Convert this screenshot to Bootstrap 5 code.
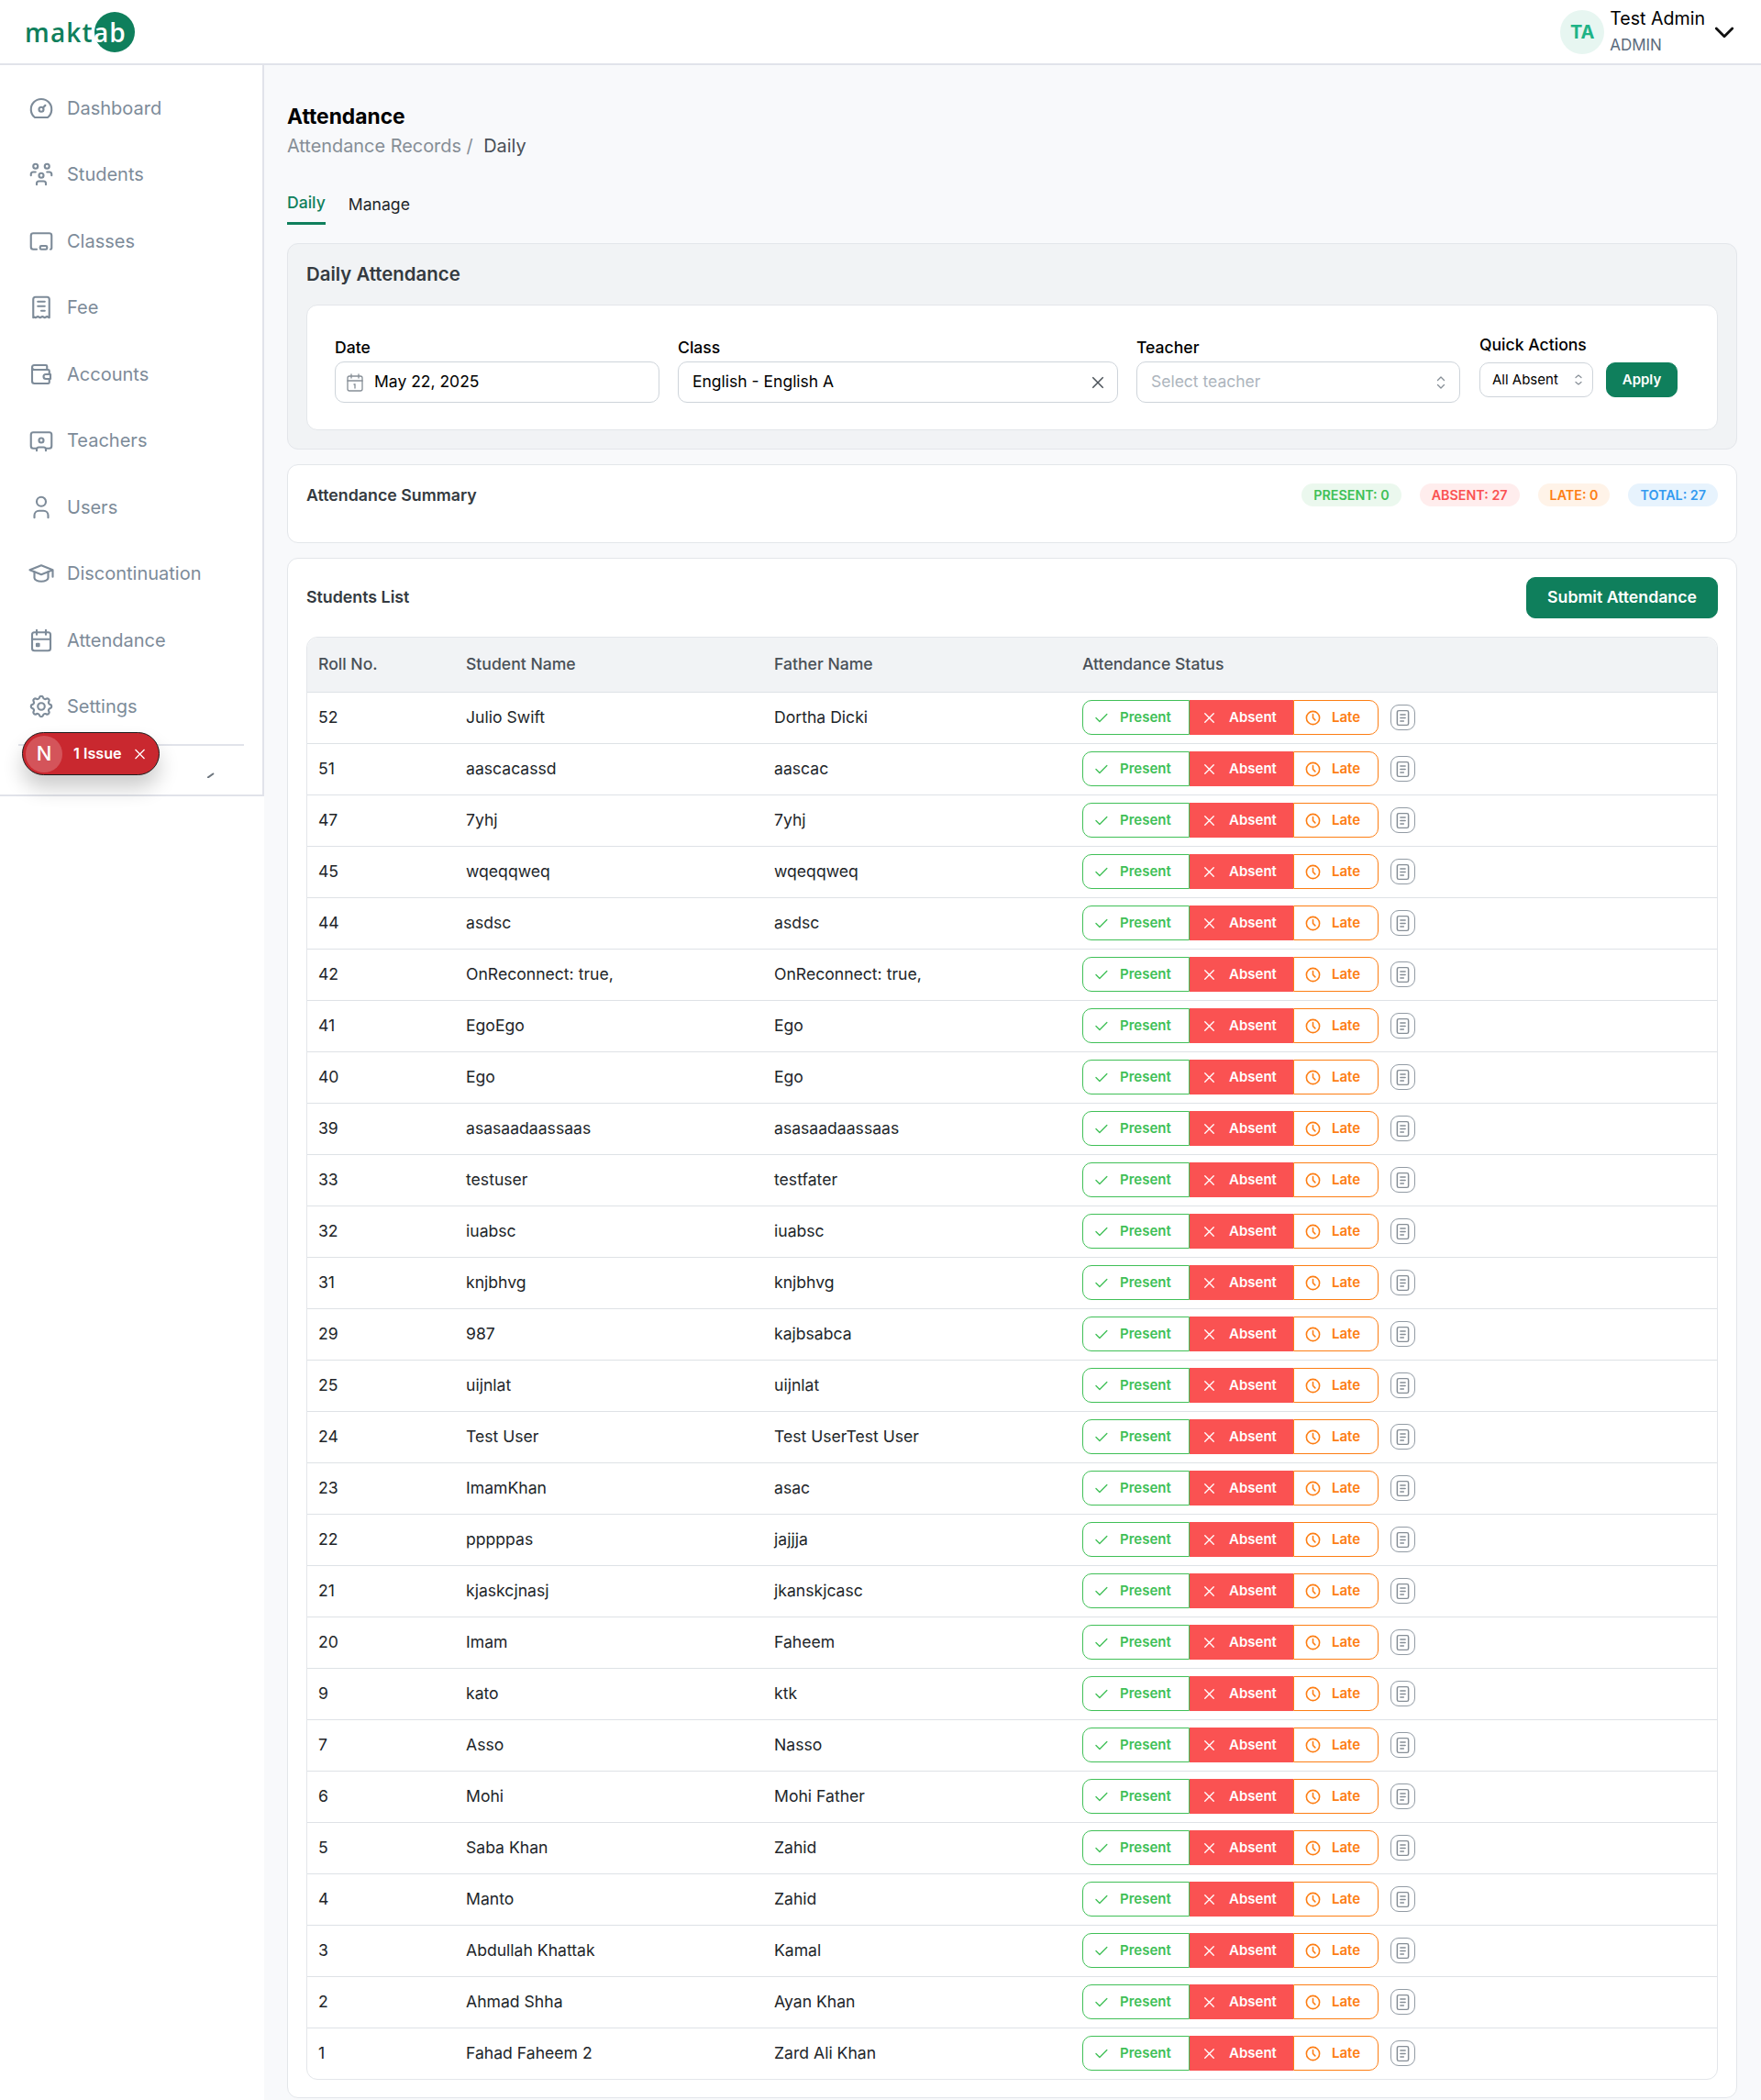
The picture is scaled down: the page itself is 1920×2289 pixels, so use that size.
<!DOCTYPE html>
<html lang="en">
<head>
<meta charset="UTF-8"/>
<title>Attendance</title>
<link href="https://cdn.jsdelivr.net/npm/bootstrap@5.3.0/dist/css/bootstrap.min.css" rel="stylesheet"/>
<style>
body { font-family: Inter, "Liberation Sans", sans-serif; background: #f8f9fb; font-size: 16px; color: #000; }
.top-bar { height: 71px; padding: 0; background: #fff; border-bottom: 2px solid #e1e3ea; }
.brand-mark { position: relative; display: block; width: 120px; height: 46px; margin-left: 27px; font-family: "Open Sans", sans-serif; font-weight: 600; font-size: 28px; line-height: 46px; color: #0f7f5c; letter-spacing: 1.2px; }
.brand-mark i { position: absolute; left: 76px; top: 1px; width: 44px; height: 44px; border-radius: 50%; background: #0f7f5c; z-index: 0; }
.brand-mark span { position: relative; z-index: 1; }
.brand-mark b { color: #fff; font-weight: 600; }
.user-dot { width: 48px; height: 48px; border-radius: 50%; background: #e7f6f1; color: #1eb386; font-weight: 700; font-size: 20px; }
.user-text { margin-left: 6px; margin-right: 7px; }
.user-name { font-size: 19.6px; line-height: 29px; }
.user-role { font-size: 17px; line-height: 29px; color: #5b6b7d; }
.user-caret { margin-right: 26px; }
.side-col { width: 288px; flex: 0 0 288px; background: #fff; }
.side-inner { position: relative; height: 797px; border-right: 2px solid #e1e3ea; border-bottom: 2px solid #e1e3ea; padding-top: 10.5px; }
.side-link { height: 72.5px; padding: 0 0 0 30px; gap: 13px; color: #7d8b99; font-size: 20px; }
.side-link svg { width: 30px; height: 30px; flex: none; }
.side-rule { position: absolute; left: 20px; right: 20px; top: 740px; border-top: 2px solid #e1e3ea; }
.side-mark { position: absolute; left: 226px; top: 771px; }
.issue-pill { position: absolute; left: 24px; top: 727px; width: 150px; height: 47px; border-radius: 24px; background: #c9282f; border: 1.5px solid #1c1c1c; box-shadow: 0 14px 22px rgba(0,0,0,.2); color: #fff; font-weight: 600; font-size: 16.2px; }
.issue-n { width: 40px; height: 40px; margin-left: 3px; border-radius: 50%; background: #d4545a; font-size: 22px; font-weight: 500; }
.page-body { flex: 1; min-width: 0; padding: 0 26px 2px 25px; }
.page-title { font-size: 22.8px; font-weight: 700; line-height: 30px; margin: 41px 0 0; }
.crumbs { font-size: 19.9px; line-height: 30px; color: #868e96; margin: 2px 0 27px; }
.crumbs span { color: #495057; margin-left: 6px; }
.tab-row { gap: 25px; height: 44px; }
.tab-item { font-size: 17.6px; line-height: 26px; color: #212529; padding-top: 9px; }
.tab-item.on { color: #0f7f5c; font-weight: 500; height: 44px; padding-top: 7px; border-bottom: 3px solid #0f7f5c; }
.box { border: 1px solid #e3e6ea; border-radius: 12px; background: #fff; margin-bottom: 16px; }
.box-grey { background: #f1f3f5; padding: 19px 20px 20px; margin-top: 20px; }
.box-title { font-size: 20.4px; font-weight: 600; color: #343a40; line-height: 28px; margin: 0 0 19px; }
.filter-box { border: 1px solid #e3e6ea; border-radius: 12px; background: #fff; height: 137px; padding: 31px 30px 0; }
.filter-grid { display: grid; grid-template-columns: 354px 480px 353px auto; gap: 20px; }
.filter-field { padding-top: 3px; }
.filter-field label, .filter-quick label { display: block; font-size: 17.6px; line-height: 24px; font-weight: 500; margin-bottom: 3px; }
.filter-quick label { margin-bottom: 7px; }
.filter-quick { padding-left: 1px; }
.fake-input { height: 45px; border: 1.5px solid #ced4da; border-radius: 10px; background: #fff; padding: 0 13px 0 15px; font-size: 17.5px; }
.fake-input.blank { color: #adb5bd; }
.fake-input.dated { padding-left: 9px; gap: 9px; }
.fake-small { height: 38px; width: 124px; border: 1.5px solid #ced4da; border-radius: 10px; padding: 0 10px 0 13px; font-size: 15px; }
.quick-row { gap: 14px; }
.btn-green { background: #0f7f5c; border-color: #0f7f5c; color: #fff; font-weight: 600; }
.btn-green:hover { background: #0d6e50; color: #fff; }
.apply-btn { height: 38px; width: 78px; padding: 0; border-radius: 10px; font-size: 15px; }
.submit-btn { height: 45px; width: 209px; padding: 0; border-radius: 10px; font-size: 17.7px; }
.sum-box { height: 86px; padding: 20px; }
.sum-title { font-size: 17.8px; font-weight: 600; color: #343a40; }
.tally { height: 25px; padding: 0 13px; border-radius: 13px; font-size: 14.3px; font-weight: 600; line-height: 25px; margin-left: 20px; }
.tally-p { background: #ebf8ee; color: #40c057; }
.tally-a { background: #ffeded; color: #fa5252; }
.tally-l { background: #fff3e8; color: #fd7e14; }
.tally-t { background: #e7f3fd; color: #339af0; }
.list-box { height: 1679px; padding: 20px; margin-bottom: 0; }
.list-top { height: 45px; margin-bottom: 20px; }
.grid-wrap { border: 1px solid #e3e6ea; border-radius: 12px; height: 1573px; }
.grid-wrap table { table-layout: fixed; margin: 0; font-size: 17.6px; }
.grid-wrap th { height: 59px; background: #f1f3f5; font-weight: 500; color: #495057; padding: 0 12px; vertical-align: middle; border-bottom: 1px solid #dee2e6; }
.grid-wrap th:first-child { border-top-left-radius: 12px; }
.grid-wrap th:last-child { border-top-right-radius: 12px; }
.grid-wrap td { height: 56px; padding: 0 12px; vertical-align: middle; border-bottom: 1px solid #dee2e6; }
.grid-wrap tr:last-child td { border-bottom: 0; }
.mark-group { height: 38px; }
.mark-btn { display: flex; align-items: center; height: 38px; font-size: 15px; font-weight: 600; background: #fff; border: 1.5px solid; }
.mark-btn svg { width: 19px; height: 19px; flex: none; }
.mark-p { width: 117px; padding-left: 10px; gap: 11px; color: #40c057; border-color: #40c057; border-radius: 10px 0 0 10px; }
.mark-a { width: 113px; padding-left: 12px; gap: 12px; color: #fff; background: #fa5252; border-color: #fa5252; border-width: 1.5px 0; }
.mark-l { width: 93px; padding-left: 11px; gap: 11px; color: #fd7e14; border-color: #fd7e14; border-radius: 0 10px 10px 0; }
.note-btn { width: 27px; height: 28px; margin-left: 13px; border: 1.5px solid #929ba4; border-radius: 9px; color: #868e96; }
.note-btn svg { width: 21px; height: 21px; }
</style>
</head>
<body>

<nav class="navbar top-bar">
  <div class="d-flex align-items-center justify-content-between w-100">
    <a class="brand-mark text-decoration-none"><i></i><span>makt<b>ab</b></span></a>
    <div class="d-flex align-items-center">
      <div class="user-dot d-flex align-items-center justify-content-center">TA</div>
      <div class="user-text">
        <div class="user-name">Test Admin</div>
        <div class="user-role">ADMIN</div>
      </div>
      <svg class="user-caret" width="28" height="28" viewBox="0 0 24 24" fill="none" stroke="#111" stroke-width="2.4" stroke-linecap="round" stroke-linejoin="round"><path d="M4.500 8.500l7.500 7.500l7.500 -7.500"/></svg>
    </div>
  </div>
</nav>

<div class="d-flex">
  <aside class="side-col">
    <div class="side-inner">
      <div id="side-nav" class="d-flex flex-column"></div>
      <div class="side-rule"></div>
      <svg class="side-mark" width="8" height="6" viewBox="0 0 8 6"><path d="M0 6l7 -5" stroke="#6c757d" stroke-width="2"/></svg>
      <div class="issue-pill d-flex align-items-center">
        <div class="issue-n d-flex align-items-center justify-content-center">N</div>
        <span class="ms-2 ps-1">1 Issue</span>
        <svg class="ms-2 ps-1" width="19" height="14" viewBox="0 0 14 14" fill="none" stroke="#fff" stroke-width="1.3"><path d="M2 2l10 10M12 2l-10 10"/></svg>
      </div>
    </div>
  </aside>

  <main class="page-body">
    <h1 class="page-title">Attendance</h1>
    <div class="crumbs">Attendance Records / <span>Daily</span></div>

    <div class="d-flex tab-row">
      <div class="tab-item on">Daily</div>
      <div class="tab-item">Manage</div>
    </div>

    <div class="box box-grey">
      <h2 class="box-title">Daily Attendance</h2>
      <div class="filter-box">
        <div class="filter-grid">
          <div class="filter-field">
            <label>Date</label>
            <div class="fake-input dated d-flex align-items-center">
              <svg width="24" height="24" viewBox="0 0 24 24" fill="none" stroke="#868e96" stroke-width="1.300" stroke-linecap="round"><rect x="4" y="5" width="16" height="16" rx="2"/><path d="M16 3v4M8 3v4M4 10h16M11 14h1v4"/></svg>
              <span>May 22, 2025</span>
            </div>
          </div>
          <div class="filter-field">
            <label>Class</label>
            <div class="fake-input d-flex align-items-center justify-content-between">
              <span>English - English A</span>
              <svg width="16" height="16" viewBox="0 0 14 14" fill="none" stroke="#495057" stroke-width="1.3"><path d="M2 2l10 10M12 2l-10 10"/></svg>
            </div>
          </div>
          <div class="filter-field">
            <label>Teacher</label>
            <div class="fake-input blank d-flex align-items-center justify-content-between">
              <span>Select teacher</span>
              <svg width="14" height="18" viewBox="0 0 14 18" fill="none" stroke="#868e96" stroke-width="1.3" stroke-linecap="round" stroke-linejoin="round"><path d="M3.500 6.500L7 3l3.500 3.500M3.500 11.500L7 15l3.500 -3.500"/></svg>
            </div>
          </div>
          <div class="filter-quick">
            <label>Quick Actions</label>
            <div class="d-flex quick-row align-items-center">
              <div class="fake-small d-flex align-items-center justify-content-between">
                <span>All Absent</span>
                <svg width="10" height="16" viewBox="0 0 10 16" fill="none" stroke="#868e96" stroke-width="1.200" stroke-linecap="round" stroke-linejoin="round"><path d="M2 5.500L5 3l3 2.500M2 10.500L5 13l3 -2.500"/></svg>
              </div>
              <button class="btn btn-green apply-btn">Apply</button>
            </div>
          </div>
        </div>
      </div>
    </div>

    <div class="box sum-box d-flex justify-content-between align-items-start">
      <div class="sum-title">Attendance Summary</div>
      <div class="d-flex">
        <span class="tally tally-p">PRESENT: 0</span>
        <span class="tally tally-a">ABSENT: 27</span>
        <span class="tally tally-l">LATE: 0</span>
        <span class="tally tally-t">TOTAL: 27</span>
      </div>
    </div>

    <div class="box list-box">
      <div class="list-top d-flex align-items-center justify-content-between">
        <div class="sum-title">Students List</div>
        <button class="btn btn-green submit-btn">Submit Attendance</button>
      </div>
      <div class="grid-wrap">
        <table class="table">
          <colgroup><col style="width:161px"/><col style="width:336px"/><col style="width:336px"/><col/></colgroup>
          <thead><tr><th>Roll No.</th><th>Student Name</th><th>Father Name</th><th>Attendance Status</th></tr></thead>
          <tbody id="rows"></tbody>
        </table>
      </div>
    </div>
  </main>
</div>

<script src="https://cdn.jsdelivr.net/npm/bootstrap@5.3.0/dist/js/bootstrap.bundle.min.js"></script>
<script>
const stroke = 'fill="none" stroke="currentColor" stroke-width="1.700" stroke-linecap="round" stroke-linejoin="round"';
const navItems = [
  ['Dashboard', '<path d="M12 13m-2 0a2 2 0 1 0 4 0a2 2 0 1 0 -4 0"/><path d="M13.450 11.550l2.050 -2.050"/><path d="M6.400 20a9 9 0 1 1 11.200 0z"/>'],
  ['Students', '<path d="M10 13a2 2 0 1 0 4 0a2 2 0 0 0 -4 0"/><path d="M8 21v-1a2 2 0 0 1 2 -2h4a2 2 0 0 1 2 2v1"/><path d="M15 5a2 2 0 1 0 4 0a2 2 0 0 0 -4 0"/><path d="M17 10h2a2 2 0 0 1 2 2v1"/><path d="M5 5a2 2 0 1 0 4 0a2 2 0 0 0 -4 0"/><path d="M3 13v-1a2 2 0 0 1 2 -2h2"/>'],
  ['Classes', '<path d="M8 19h-3a2 2 0 0 1 -2 -2v-10a2 2 0 0 1 2 -2h14a2 2 0 0 1 2 2v11a1 1 0 0 1 -1 1"/><path d="M11 17a1 1 0 0 1 1 -1h4a1 1 0 0 1 1 1v1a1 1 0 0 1 -1 1h-4a1 1 0 0 1 -1 -1z"/>'],
  ['Fee', '<path d="M5 21v-16a2 2 0 0 1 2 -2h10a2 2 0 0 1 2 2v16l-2 -1l-2 1l-2 -1l-2 1l-2 -1l-2 1l-2 -1z"/><path d="M9 7h6M9 11h6M12 15h3"/>'],
  ['Accounts', '<path d="M17 8v-3a1 1 0 0 0 -1 -1h-10a2 2 0 0 0 0 4h12a1 1 0 0 1 1 1v3m0 4v3a1 1 0 0 1 -1 1h-12a2 2 0 0 1 -2 -2v-12"/><path d="M20 12v4h-4a2 2 0 0 1 0 -4h4"/>'],
  ['Teachers', '<path d="M8 19h-3a2 2 0 0 1 -2 -2v-10a2 2 0 0 1 2 -2h14a2 2 0 0 1 2 2v10a2 2 0 0 1 -2 2h-3"/><path d="M10 12a2 2 0 1 0 4 0a2 2 0 0 0 -4 0"/><path d="M8 21v-1a2 2 0 0 1 2 -2h4a2 2 0 0 1 2 2v1"/>'],
  ['Users', '<path d="M8 7a4 4 0 1 0 8 0a4 4 0 0 0 -8 0"/><path d="M6 21v-2a4 4 0 0 1 4 -4h4a4 4 0 0 1 4 4v2"/>'],
  ['Discontinuation', '<path d="M22 9l-10 -4l-10 4l10 4l10 -4v6"/><path d="M6 10.600v5.400a6 3 0 0 0 12 0v-5.400"/>'],
  ['Attendance', '<path d="M4 7a2 2 0 0 1 2 -2h12a2 2 0 0 1 2 2v12a2 2 0 0 1 -2 2h-12a2 2 0 0 1 -2 -2z"/><path d="M16 3v4M8 3v4M4 11h16"/><path d="M8 15h2v2h-2z"/>'],
  ['Settings', '<path d="M10.325 4.317c.426 -1.756 2.924 -1.756 3.350 0a1.724 1.724 0 0 0 2.573 1.066c1.543 -.940 3.310 .826 2.370 2.370a1.724 1.724 0 0 0 1.065 2.572c1.756 .426 1.756 2.924 0 3.350a1.724 1.724 0 0 0 -1.066 2.573c.940 1.543 -.826 3.310 -2.370 2.370a1.724 1.724 0 0 0 -2.572 1.065c-.426 1.756 -2.924 1.756 -3.350 0a1.724 1.724 0 0 0 -2.573 -1.066c-1.543 .940 -3.310 -.826 -2.370 -2.370a1.724 1.724 0 0 0 -1.065 -2.572c-1.756 -.426 -1.756 -2.924 0 -3.350a1.724 1.724 0 0 0 1.066 -2.573c-.940 -1.543 .826 -3.310 2.370 -2.370c1 .608 2.296 .070 2.572 -1.065z"/><path d="M9 12a3 3 0 1 0 6 0a3 3 0 0 0 -6 0"/>']
];
document.getElementById('side-nav').innerHTML = navItems.map(n =>
  `<a class="side-link d-flex align-items-center text-decoration-none"><svg viewBox="0 0 24 24" ${stroke}>${n[1]}</svg>${n[0]}</a>`
).join('');

const students = [
  [52,'Julio Swift','Dortha Dicki'],[51,'aascacassd','aascac'],[47,'7yhj','7yhj'],[45,'wqeqqweq','wqeqqweq'],
  [44,'asdsc','asdsc'],[42,'OnReconnect: true,','OnReconnect: true,'],[41,'EgoEgo','Ego'],[40,'Ego','Ego'],
  [39,'asasaadaassaas','asasaadaassaas'],[33,'testuser','testfater'],[32,'iuabsc','iuabsc'],[31,'knjbhvg','knjbhvg'],
  [29,'987','kajbsabca'],[25,'uijnlat','uijnlat'],[24,'Test User','Test UserTest User'],[23,'ImamKhan','asac'],
  [22,'pppppas','jajjja'],[21,'kjaskcjnasj','jkanskjcasc'],[20,'Imam','Faheem'],[9,'kato','ktk'],[7,'Asso','Nasso'],
  [6,'Mohi','Mohi Father'],[5,'Saba Khan','Zahid'],[4,'Manto','Zahid'],[3,'Abdullah Khattak','Kamal'],
  [2,'Ahmad Shha','Ayan Khan'],[1,'Fahad Faheem 2','Zard Ali Khan']
];
const marks = `<div class="mark-group d-flex align-items-center">
  <div class="mark-btn mark-p"><svg viewBox="0 0 24 24" ${stroke}><path d="M5 12l5 5l10 -10"/></svg>Present</div>
  <div class="mark-btn mark-a"><svg viewBox="0 0 24 24" ${stroke}><path d="M18 6l-12 12M6 6l12 12"/></svg>Absent</div>
  <div class="mark-btn mark-l"><svg viewBox="0 0 24 24" ${stroke}><path stroke-width="2" d="M3 12a9 9 0 1 0 18 0a9 9 0 0 0 -18 0"/><path stroke-width="2" d="M12 7v5l3 3"/></svg>Late</div>
  <div class="note-btn d-flex align-items-center justify-content-center"><svg viewBox="0 0 24 24" ${stroke}><rect x="5" y="3" width="14" height="18" rx="2"/><path d="M9 8h6M9 12h6M9 16h4"/></svg></div>
</div>`;
document.getElementById('rows').innerHTML = students.map(s =>
  `<tr><td>${s[0]}</td><td>${s[1]}</td><td>${s[2]}</td><td>${marks}</td></tr>`
).join('');
</script>
</body>
</html>
